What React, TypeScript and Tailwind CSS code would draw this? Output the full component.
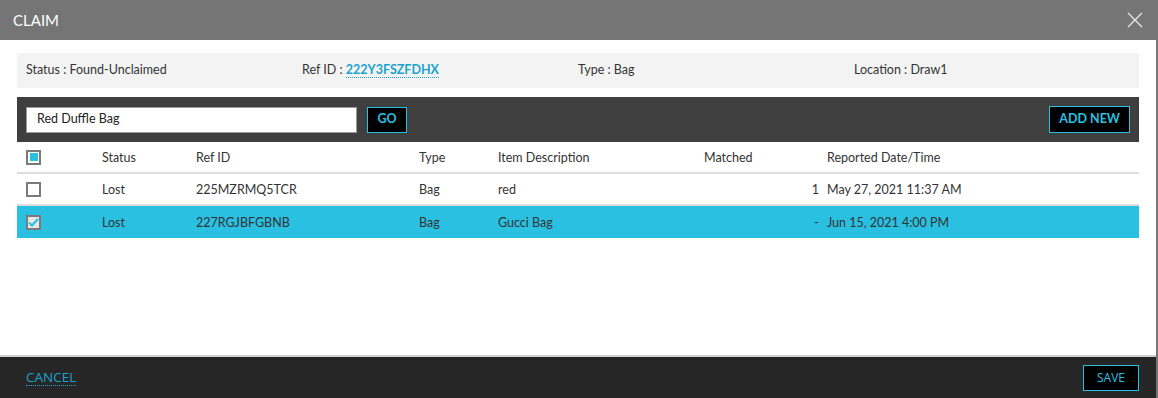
import React from 'react';

const rows = [
  { status: 'Lost', ref: '225MZRMQ5TCR', type: 'Bag', desc: 'red', matched: '1', date: 'May 27, 2021 11:37 AM', selected: false },
  { status: 'Lost', ref: '227RGJBFGBNB', type: 'Bag', desc: 'Gucci Bag', matched: '-', date: 'Jun 15, 2021 4:00 PM', selected: true },
];

function Check({ state }: { state: 'partial' | 'off' | 'on' }) {
  if (state === 'on') {
    return (
      <div className="w-[15px] h-[15px] border-2 border-[#7a7a7a] bg-[#e6e6e6] flex items-center justify-center">
        <svg width="11" height="9" viewBox="0 0 11 9">
          <path d="M1 4.5 L4 7.5 L10 1" fill="none" stroke="#29c0e2" strokeWidth="2" />
        </svg>
      </div>
    );
  }
  return (
    <div className="w-[15px] h-[15px] border-2 border-[#7a7a7a] bg-white flex items-center justify-center">
      {state === 'partial' && <div className="w-[8px] h-[8px] bg-[#29c0e2]" />}
    </div>
  );
}

export default function App() {
  return (
    <div className="w-[1158px] h-[398px] flex flex-col bg-white text-[12.5px] text-[#333] font-['Lato','Liberation_Sans',sans-serif]">
      {/* Title bar */}
      <div className="h-[40px] bg-[#757575] flex items-center justify-between pl-[13px] pr-[15px] shrink-0">
        <span className="text-white text-[15px]">CLAIM</span>
        <svg width="16" height="16" viewBox="0 0 16 16">
          <path d="M1 1 L15 15 M15 1 L1 15" stroke="#e8e8e8" strokeWidth="1.3" />
        </svg>
      </div>

      <div className="flex-1 flex flex-col border-r-2 border-[#757575] min-h-0">
        <div className="flex-1 px-[17px] pt-[13px]">
          {/* Summary */}
          <div className="h-[35px] bg-[#f3f3f3] grid grid-cols-4 items-center px-[9px]">
            <div>Status : Found-Unclaimed</div>
            <div>
              Ref ID :{' '}
              <span className="text-[#1aa3cf] font-bold border-b border-dotted border-[#1aa3cf]">222Y3FSZFDHX</span>
            </div>
            <div>Type : Bag</div>
            <div>Location : Draw1</div>
          </div>

          {/* Search toolbar */}
          <div className="mt-[9px] h-[45px] bg-[#3f3f3f] flex items-center px-[9px] gap-[10px]">
            <div className="w-[331px] h-[26px] bg-white border border-[#999] flex items-center px-[10px] text-[#222]">
              Red Duffle Bag
            </div>
            <button className="h-[26px] w-[40px] bg-black border border-[#29c0e2] text-[#29c0e2] font-bold">GO</button>
            <div className="flex-1" />
            <button className="h-[27px] px-[9px] bg-black border border-[#29c0e2] text-[#29c0e2] font-bold">ADD NEW</button>
          </div>

          {/* Table */}
          <div className="grid grid-cols-[85px_94px_223px_79px_206px_117px_1fr]">
            <div className="h-[32px] flex items-center pl-[9px] border-b-2 border-[#ddd]"><Check state="partial" /></div>
            <div className="h-[32px] flex items-center pt-[2px] border-b-2 border-[#ddd]">Status</div>
            <div className="h-[32px] flex items-center pt-[2px] border-b-2 border-[#ddd]">Ref ID</div>
            <div className="h-[32px] flex items-center pt-[2px] border-b-2 border-[#ddd]">Type</div>
            <div className="h-[32px] flex items-center pt-[2px] border-b-2 border-[#ddd]">Item Description</div>
            <div className="h-[32px] flex items-center pt-[2px] border-b-2 border-[#ddd]">Matched</div>
            <div className="h-[32px] flex items-center pt-[2px] border-b-2 border-[#ddd] pl-[6px]">Reported Date/Time</div>
            {rows.map((r, i) => {
              const cell = `h-[32px] flex items-center ${r.selected ? 'bg-[#29c0e2]' : 'border-b-2 border-[#ddd]'}`;
              return (
                <React.Fragment key={i}>
                  <div className={`${cell} pl-[9px]`}><Check state={r.selected ? 'on' : 'off'} /></div>
                  <div className={`${cell} pt-[2px]`}>{r.status}</div>
                  <div className={`${cell} pt-[2px]`}>{r.ref}</div>
                  <div className={`${cell} pt-[2px]`}>{r.type}</div>
                  <div className={`${cell} pt-[2px]`}>{r.desc}</div>
                  <div className={`${cell} pt-[2px] justify-end pr-[2px]`}>{r.matched}</div>
                  <div className={`${cell} pt-[2px] pl-[6px]`}>{r.date}</div>
                </React.Fragment>
              );
            })}
          </div>
        </div>

        {/* Footer */}
        <div className="h-[43px] bg-[#262626] border-t-2 border-[#cfcfcf] flex items-center justify-between pl-[26px] pr-[17px] shrink-0">
          <span className="text-[#1aa3cf] text-[13.5px] leading-[16px] border-b border-dotted border-[#1aa3cf] font-['Open_Sans','Liberation_Sans',sans-serif]">CANCEL</span>
          <button className="h-[26px] w-[56px] bg-black border border-[#29c0e2] text-[#29c0e2] text-[12px] font-['Open_Sans','Liberation_Sans',sans-serif]">SAVE</button>
        </div>
      </div>
    </div>
  );
}
